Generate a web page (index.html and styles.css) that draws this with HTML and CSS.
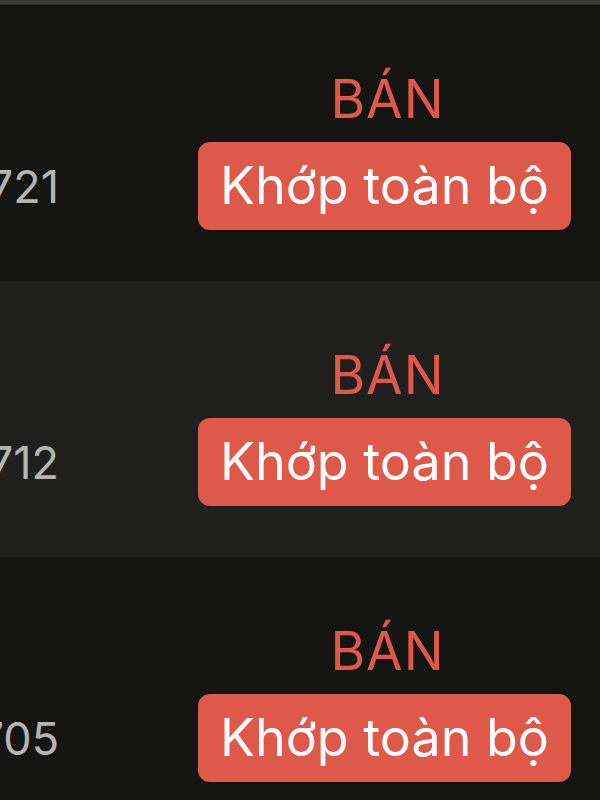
FILE: index.html
```html
<!DOCTYPE html>
<html lang="vi">
<head>
    <meta charset="UTF-8">
    <meta name="viewport" content="width=device-width, initial-scale=1.0">
    <title>Lệnh khớp</title>
    <link rel="stylesheet" href="styles.css">
</head>
<body>

    <div class="top-bar"></div>

    <!-- Danh sách lệnh -->
    <div class="order-list">
        <div class="order-row">
            <div class="order-id">0000721</div>
            <div class="order-side">
                <div class="side-label">BÁN</div>
                <div class="status-badge">Khớp toàn bộ</div>
            </div>
        </div>

        <div class="order-row alt">
            <div class="order-id">0000712</div>
            <div class="order-side">
                <div class="side-label">BÁN</div>
                <div class="status-badge">Khớp toàn bộ</div>
            </div>
        </div>

        <div class="order-row">
            <div class="order-id">0000705</div>
            <div class="order-side">
                <div class="side-label">BÁN</div>
                <div class="status-badge">Khớp toàn bộ</div>
            </div>
        </div>
    </div>

</body>
</html>
```

FILE: styles.css
```css
body {
    font-family: Inter, "Noto Sans", sans-serif;
    background-color: #141513;
    margin: 0;
    overflow: hidden;
}

.top-bar {
    height: 4px;
    background-color: #383938;
    border-bottom: 1px solid #2a2b2a;
}

.order-row {
    display: flex;
    align-items: flex-end;
    height: 276px;
    box-sizing: border-box;
    padding: 64px 29px 51px 0;
    background-color: #141513;
}

.order-row.alt {
    background-color: #1f201e;
}

.order-id {
    width: 59px;
    height: 88px;
    flex-shrink: 0;
    display: flex;
    align-items: center;
    justify-content: flex-end;
    white-space: nowrap;
    font-size: 45px;
    color: #b4b4b2;
}

.order-side {
    margin-left: auto;
    display: flex;
    flex-direction: column;
    align-items: center;
}

.side-label {
    font-size: 53px;
    line-height: 1.2;
    letter-spacing: 1px;
    color: #e0564a;
    margin: 0 0 10px 6px;
}

.status-badge {
    font-size: 52px;
    line-height: 1.2;
    color: #fff;
    background-color: #df594b;
    border-radius: 12px;
    padding: 13px 22px;
}
```
